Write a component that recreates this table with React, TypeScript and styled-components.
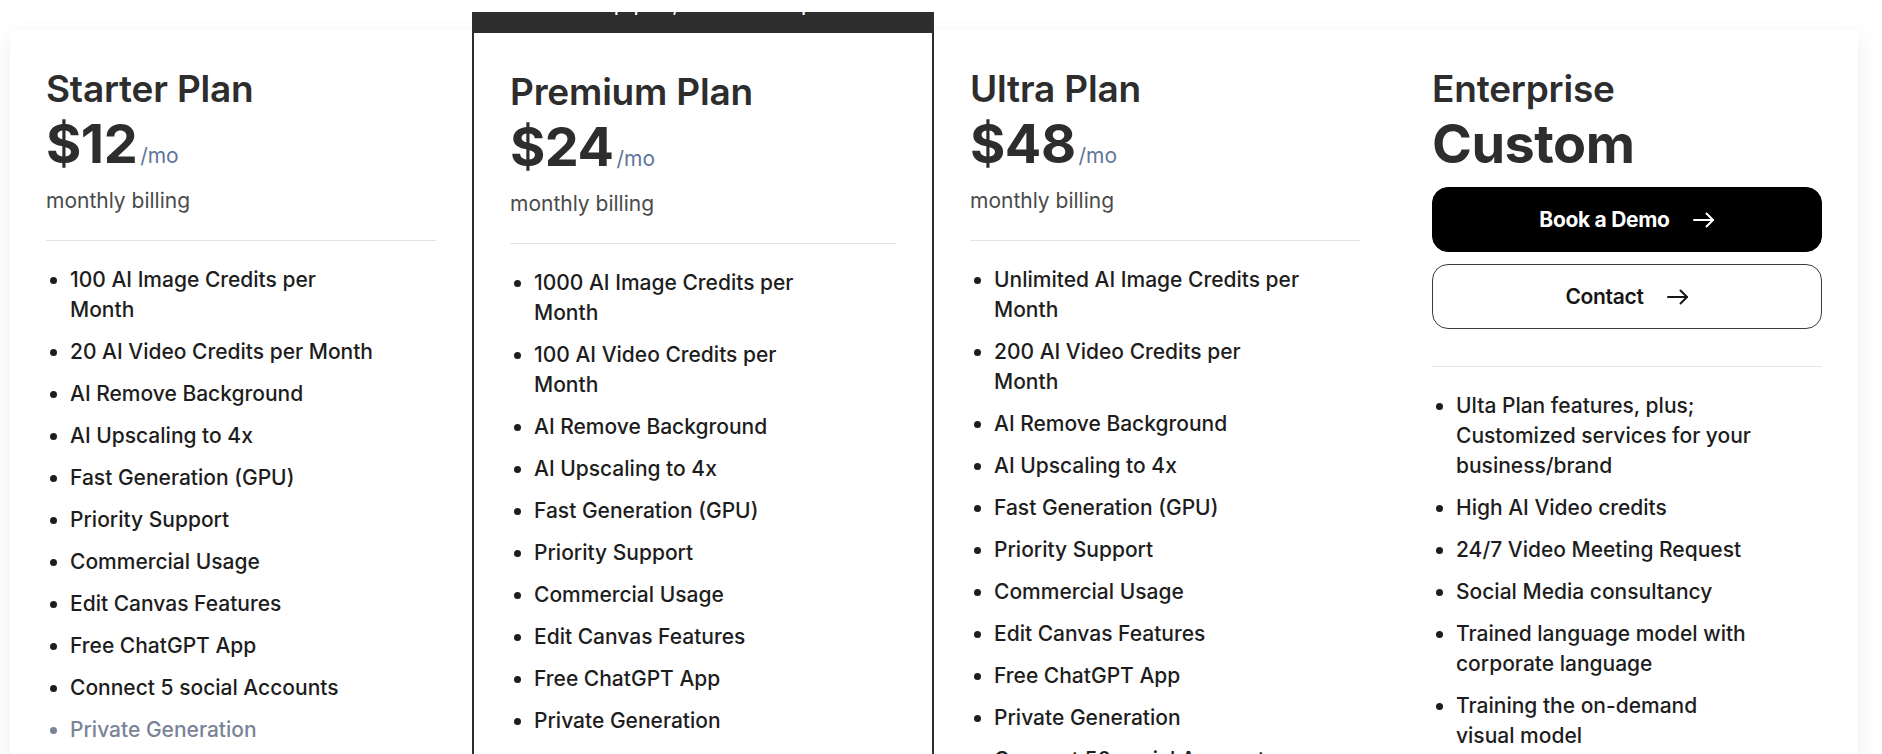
import React from "react";
import styled, { createGlobalStyle } from "styled-components";

const GlobalStyle = createGlobalStyle`
  html, body {
    margin: 0;
    padding: 0;
    overflow: hidden;
    background: #ffffff;
    font-family: Inter, "Noto Sans", "Liberation Sans", sans-serif;
    -webkit-font-smoothing: antialiased;
  }
  * { box-sizing: border-box; }
`;

const Page = styled.main`
  padding: 30px 24px 0 10px;
  height: 754px;
`;

const Pricing = styled.section`
  display: grid;
  grid-template-columns: repeat(4, 462px);
  align-items: stretch;
  background: #ffffff;
  box-shadow: 0 6px 22px rgba(0, 0, 0, 0.07);
  min-height: 900px;
`;

const Column = styled.article<{ $featured?: boolean }>`
  display: flex;
  flex-direction: column;
  background: #ffffff;
  padding-bottom: 48px;
  ${(p) =>
    p.$featured
      ? `
    margin-top: -18px;
    border: 2px solid #2d2d2d;
    border-top: none;
  `
      : ``}
`;

const Banner = styled.div`
  height: 21px;
  margin: 0 -2px;
  background: #2d2d2d;
  overflow: hidden;
  display: flex;
  justify-content: center;
`;

const BannerText = styled.span`
  display: block;
  margin-top: -15px;
  font-size: 16px;
  line-height: 18px;
  font-weight: 600;
  color: #ffffff;
  white-space: nowrap;
`;

const Body = styled.div`
  display: flex;
  flex-direction: column;
  padding: 37px 36px 0 36px;
`;

const Title = styled.h3`
  margin: 0;
  font-size: 37px;
  line-height: 44px;
  font-weight: 600;
  color: #2d2d2d;
  letter-spacing: -0.2px;
`;

const PriceRow = styled.div`
  display: flex;
  align-items: baseline;
  margin-top: 4px;
  height: 58px;
`;

const Price = styled.span`
  font-size: 54px;
  line-height: 58px;
  font-weight: 700;
  color: #2d2d2d;
  letter-spacing: -0.5px;
`;

const Per = styled.span`
  margin-left: 3px;
  font-size: 21px;
  font-weight: 400;
  color: #61769a;
`;

const Billing = styled.p`
  margin: 14px 0 0;
  font-size: 21px;
  line-height: 28px;
  font-weight: 400;
  color: #4a4a4a;
`;

const Divider = styled.hr<{ $gap: number }>`
  margin: ${(p) => p.$gap}px 0 0;
  border: none;
  border-top: 1px solid #e3e3e3;
  height: 0;
`;

const Buttons = styled.div`
  display: flex;
  flex-direction: column;
  gap: 12px;
  margin-top: 14px;
`;

const Button = styled.button<{ $primary?: boolean }>`
  display: flex;
  align-items: center;
  justify-content: center;
  gap: 23px;
  height: 65px;
  width: 100%;
  border-radius: 16px;
  font-family: inherit;
  font-size: 21px;
  font-weight: ${(p) => (p.$primary ? 700 : 600)};
  letter-spacing: -0.3px;
  cursor: pointer;
  background: ${(p) => (p.$primary ? "#000000" : "#ffffff")};
  color: ${(p) => (p.$primary ? "#ffffff" : "#161616")};
  border: 1px solid ${(p) => (p.$primary ? "#000000" : "#3c3c3c")};
`;

const Features = styled.ul`
  margin: 24px 0 0;
  padding: 0 0 0 24px;
  list-style: disc;
`;

const Feature = styled.li<{ $muted?: boolean }>`
  font-size: 21px;
  line-height: 30px;
  font-weight: 500;
  color: ${(p) => (p.$muted ? "#7a8497" : "#1d1d1d")};
  white-space: nowrap;
  margin-bottom: 12px;
  &::marker {
    color: ${(p) => (p.$muted ? "#7a8497" : "#1d1d1d")};
  }
`;

const Arrow = () => (
  <svg width="22" height="16" viewBox="0 0 22 16" fill="none" stroke="currentColor" strokeWidth="2" strokeLinecap="round" strokeLinejoin="round">
    <path d="M1 8h19" />
    <path d="M13.5 1.5L20 8l-6.5 6.5" />
  </svg>
);

type Item = { lines: string[]; muted?: boolean };

const f = (...lines: string[]): Item => ({ lines });

const starter: Item[] = [
  f("100 AI Image Credits per", "Month"),
  f("20 AI Video Credits per Month"),
  f("AI Remove Background"),
  f("AI Upscaling to 4x"),
  f("Fast Generation (GPU)"),
  f("Priority Support"),
  f("Commercial Usage"),
  f("Edit Canvas Features"),
  f("Free ChatGPT App"),
  f("Connect 5 social Accounts"),
  { lines: ["Private Generation"], muted: true },
];

const premium: Item[] = [
  f("1000 AI Image Credits per", "Month"),
  f("100 AI Video Credits per", "Month"),
  f("AI Remove Background"),
  f("AI Upscaling to 4x"),
  f("Fast Generation (GPU)"),
  f("Priority Support"),
  f("Commercial Usage"),
  f("Edit Canvas Features"),
  f("Free ChatGPT App"),
  f("Private Generation"),
];

const ultra: Item[] = [
  f("Unlimited AI Image Credits per", "Month"),
  f("200 AI Video Credits per", "Month"),
  f("AI Remove Background"),
  f("AI Upscaling to 4x"),
  f("Fast Generation (GPU)"),
  f("Priority Support"),
  f("Commercial Usage"),
  f("Edit Canvas Features"),
  f("Free ChatGPT App"),
  f("Private Generation"),
  f("Connect 50 social Accounts"),
];

const enterprise: Item[] = [
  f("Ulta Plan features, plus;", "Customized services for your", "business/brand"),
  f("High AI Video credits"),
  f("24/7 Video Meeting Request"),
  f("Social Media consultancy"),
  f("Trained language model with", "corporate language"),
  f("Training the on-demand", "visual model"),
];

const FeatureList = ({ items }: { items: Item[] }) => (
  <Features>
    {items.map((it, i) => (
      <Feature key={i} $muted={it.muted}>
        {it.lines.map((l, j) => (
          <React.Fragment key={j}>
            {j > 0 && <br />}
            {l}
          </React.Fragment>
        ))}
      </Feature>
    ))}
  </Features>
);

const PlanBody = ({ name, price, items }: { name: string; price: string; items: Item[] }) => (
  <Body>
    <Title>{name}</Title>
    <PriceRow>
      <Price>{price}</Price>
      <Per>/mo</Per>
    </PriceRow>
    <Billing>monthly billing</Billing>
    <Divider $gap={25} />
    <FeatureList items={items} />
  </Body>
);

export default function App() {
  return (
    <>
      <GlobalStyle />
      <Page>
        <Pricing>
          <Column>
            <PlanBody name="Starter Plan" price="$12" items={starter} />
          </Column>
          <Column $featured>
            <Banner>
              <BannerText>Most popular, Recommended plan</BannerText>
            </Banner>
            <PlanBody name="Premium Plan" price="$24" items={premium} />
          </Column>
          <Column>
            <PlanBody name="Ultra Plan" price="$48" items={ultra} />
          </Column>
          <Column>
            <Body>
              <Title>Enterprise</Title>
              <PriceRow>
                <Price>Custom</Price>
              </PriceRow>
              <Buttons>
                <Button $primary>
                  Book a Demo
                  <Arrow />
                </Button>
                <Button>
                  Contact
                  <Arrow />
                </Button>
              </Buttons>
              <Divider $gap={37} />
              <FeatureList items={enterprise} />
            </Body>
          </Column>
        </Pricing>
      </Page>
    </>
  );
}
